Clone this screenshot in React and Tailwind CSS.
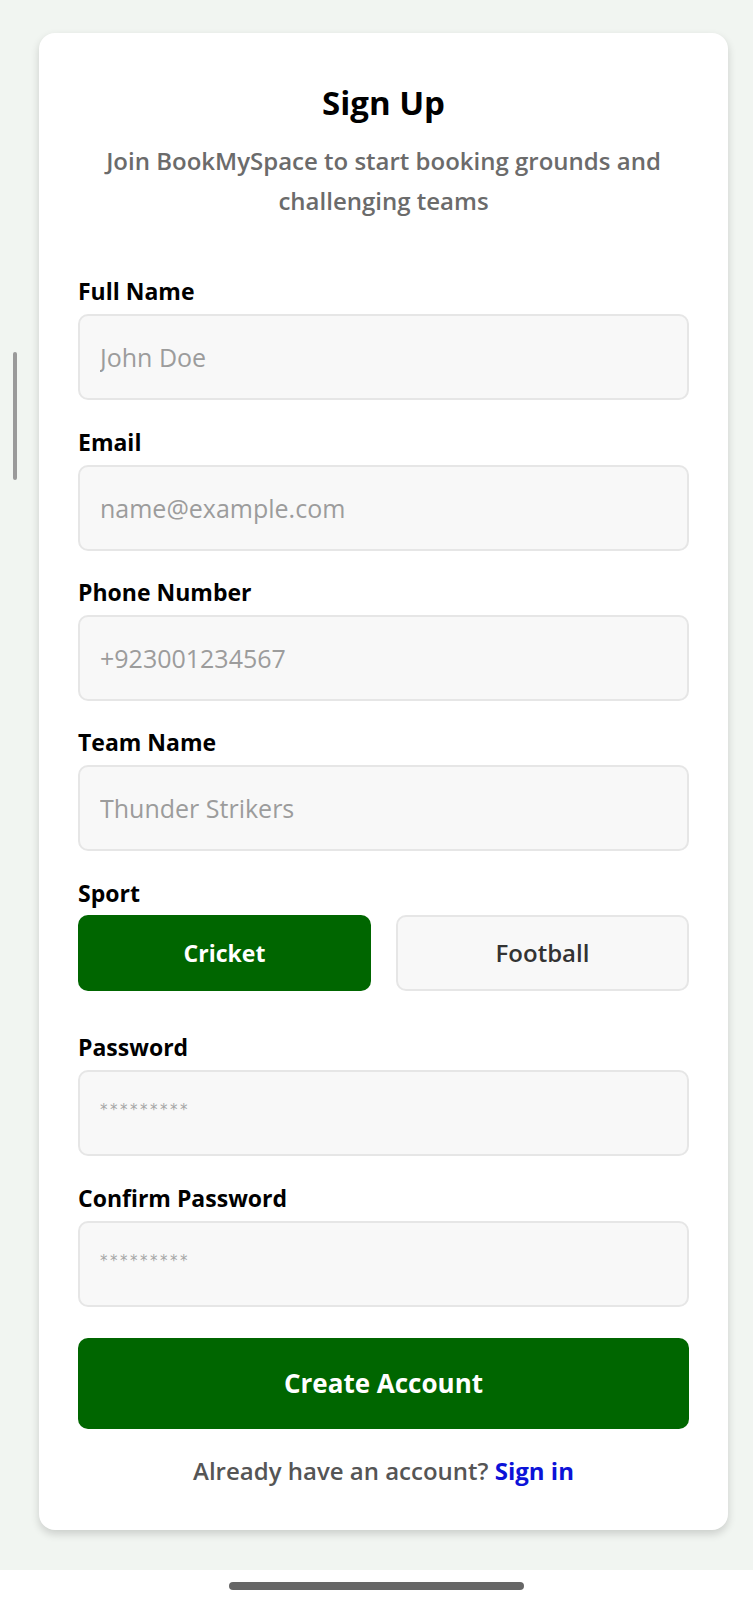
import React, { useState } from 'react'

const Field = ({ label, placeholder, type = 'text', className = '' }) => (
  <div className={className}>
    <label className="block text-[23px] leading-[32px] font-bold text-black">{label}</label>
    <input
      type={type}
      placeholder={placeholder}
      className="mt-[7px] block w-full h-[86px] rounded-[10px] border-2 border-[#e6e6e6] bg-[#f8f8f8] px-[20px] text-[25px] text-[#333] placeholder:text-[#9c9c9c] outline-none"
    />
  </div>
)

const PasswordField = ({ label, className = '' }) => (
  <div className={className}>
    <label className="block text-[23px] leading-[32px] font-bold text-black">{label}</label>
    <div className="mt-[7px] h-[86px] rounded-[10px] border-2 border-[#e6e6e6] bg-[#f8f8f8] px-[20px] pt-[25px]">
      <span className="font-['DejaVu_Sans',sans-serif] text-[15px] leading-[20px] tracking-[2.5px] text-[#a5a5a5]">*********</span>
    </div>
  </div>
)

export default function App() {
  const [sport, setSport] = useState('cricket')

  return (
    <div className="relative min-h-[1599px] bg-[#f1f5f1] font-['Open_Sans',sans-serif] flex flex-col">
      {/* scroll indicator */}
      <div className="absolute left-[13px] top-[352px] h-[128px] w-[4px] rounded-full bg-[#9a9a9a]" />

      <div className="flex-1 pt-[33px]">
        <div className="ml-[39px] w-[689px] rounded-[16px] bg-white px-[39px] pt-[48px] pb-[43px] shadow-[0_4px_8px_rgba(0,0,0,0.16)]">
          <h1 className="text-center text-[33px] leading-[44px] font-bold text-black">Sign Up</h1>
          <p className="mt-[16px] text-center text-[24px] leading-[40px] font-semibold text-[#6b6b6b]">
            Join BookMySpace to start booking grounds and challenging teams
          </p>

          <Field className="mt-[54px]" label="Full Name" placeholder="John Doe" />
          <Field className="mt-[26px]" label="Email" placeholder="name@example.com" type="email" />
          <Field className="mt-[25px]" label="Phone Number" placeholder="+923001234567" />
          <Field className="mt-[25px]" label="Team Name" placeholder="Thunder Strikers" />

          <div className="mt-[26px]">
            <label className="block text-[23px] leading-[32px] font-bold text-black">Sport</label>
            <div className="mt-[6px] grid grid-cols-2 gap-[25px]">
              <button
                onClick={() => setSport('cricket')}
                className={`h-[76px] rounded-[10px] ${
                  sport === 'cricket'
                    ? 'bg-[#006600] text-white font-bold text-[23px]'
                    : 'border-2 border-[#e6e6e6] bg-[#f8f8f8] text-[#333] font-semibold text-[24px]'
                }`}
              >
                Cricket
              </button>
              <button
                onClick={() => setSport('football')}
                className={`h-[76px] rounded-[10px] ${
                  sport === 'football'
                    ? 'bg-[#006600] text-white font-bold text-[23px]'
                    : 'border-2 border-[#e6e6e6] bg-[#f8f8f8] text-[#333] font-semibold text-[24px]'
                }`}
              >
                Football
              </button>
            </div>
          </div>

          <PasswordField className="mt-[40px]" label="Password" />
          <PasswordField className="mt-[26px]" label="Confirm Password" />

          <button className="mt-[31px] h-[91px] w-full rounded-[10px] bg-[#006600] text-[26px] font-bold text-white">
            Create Account
          </button>

          <p className="mt-[26px] text-center text-[24px] leading-[32px] font-semibold text-[#555]">
            Already have an account? <a className="font-bold text-[#0c12d8]">Sign in</a>
          </p>
        </div>
      </div>

      {/* home indicator bar */}
      <div className="h-[29px] bg-white flex justify-center pt-[12px]">
        <div className="h-[8px] w-[295px] rounded-full bg-[#666]" />
      </div>
    </div>
  )
}
